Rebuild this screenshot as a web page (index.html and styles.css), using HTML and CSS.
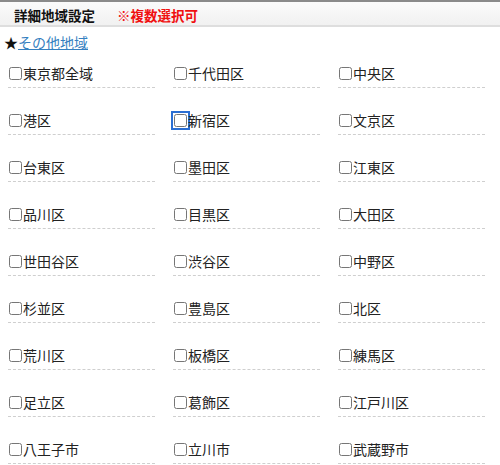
FILE: index.html
```html
<!DOCTYPE html>
<html lang="ja">
<head>
  <meta charset="UTF-8" />
  <meta name="viewport" content="width=device-width, initial-scale=1.0" />
  <title>詳細地域設定</title>
  <link rel="stylesheet" href="styles.css">
</head>
<body>
  <div class="head">
    <span class="head-title">詳細地域設定</span>
    <span class="head-note">※複数選択可</span>
  </div>
  <div class="other">★<a href="#">その他地域</a></div>
  <div class="areas">
    <label class="area"><input type="checkbox">東京都全域</label>
    <label class="area"><input type="checkbox">千代田区</label>
    <label class="area"><input type="checkbox">中央区</label>
    <label class="area"><input type="checkbox">港区</label>
    <label class="area"><input type="checkbox" class="focused">新宿区</label>
    <label class="area"><input type="checkbox">文京区</label>
    <label class="area"><input type="checkbox">台東区</label>
    <label class="area"><input type="checkbox">墨田区</label>
    <label class="area"><input type="checkbox">江東区</label>
    <label class="area"><input type="checkbox">品川区</label>
    <label class="area"><input type="checkbox">目黒区</label>
    <label class="area"><input type="checkbox">大田区</label>
    <label class="area"><input type="checkbox">世田谷区</label>
    <label class="area"><input type="checkbox">渋谷区</label>
    <label class="area"><input type="checkbox">中野区</label>
    <label class="area"><input type="checkbox">杉並区</label>
    <label class="area"><input type="checkbox">豊島区</label>
    <label class="area"><input type="checkbox">北区</label>
    <label class="area"><input type="checkbox">荒川区</label>
    <label class="area"><input type="checkbox">板橋区</label>
    <label class="area"><input type="checkbox">練馬区</label>
    <label class="area"><input type="checkbox">足立区</label>
    <label class="area"><input type="checkbox">葛飾区</label>
    <label class="area"><input type="checkbox">江戸川区</label>
    <label class="area"><input type="checkbox">八王子市</label>
    <label class="area"><input type="checkbox">立川市</label>
    <label class="area"><input type="checkbox">武蔵野市</label>
  </div>
</body>
</html>
```

FILE: styles.css
```css
* { box-sizing: border-box; }
body { margin: 0; background: #fff; color: #222; font-family: "Noto Sans CJK JP", "Noto Sans", sans-serif; overflow: hidden; }
.head { border-top: 2px solid #8a8a8a; border-bottom: 2px solid #dedede; background: linear-gradient(#fbfbfb, #f1f1f1); padding: 3px 0 0 14px; line-height: 20px; font-size: 13.5px; font-weight: bold; }
.head-title { color: #111; }
.head-note { color: #f01010; margin-left: 19px; }
.other { padding: 5px 0 0 4px; line-height: 20px; font-size: 14px; color: #111; }
.other a { color: #3580c0; text-decoration: underline; }
.areas { display: grid; grid-template-columns: repeat(3, 147px); column-gap: 18px; row-gap: 11px; padding-left: 8px; }
.area { display: flex; align-items: center; padding: 11px 0 4px; line-height: 20px; font-size: 14px; border-bottom: 1px dashed #cfcfcf; }
.area input { width: 13px; height: 13px; margin: 0 1px 0 1px; }
.area input.focused { outline: 2px solid #2a6ed2; outline-offset: 1px; border-radius: 2px; }
```
